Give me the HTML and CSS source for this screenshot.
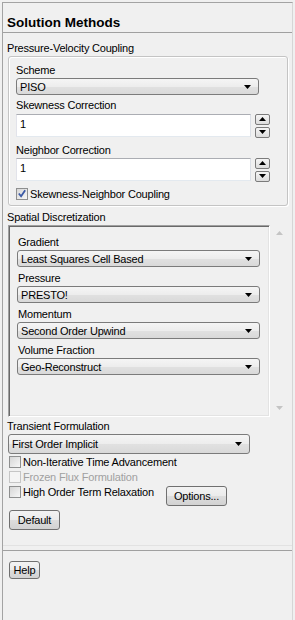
FILE: index.html
```html
<!DOCTYPE html>
<html lang="en">
<head>
    <meta charset="UTF-8">
    <meta name="viewport" content="width=device-width, initial-scale=1.0">
    <title>Solution Methods</title>
    <link rel="stylesheet" href="styles.css">
</head>
<body>
  <div class="panel">
    <div class="panel-title">Solution Methods</div>

    <div class="panel-main">
      <!-- Pressure-Velocity Coupling -->
      <div class="section-label">Pressure-Velocity Coupling</div>
      <div class="group">
        <div class="field-label">Scheme</div>
        <div class="select">
          <span>PISO</span>
          <svg class="arrow" width="7" height="4" viewBox="0 0 7 4"><path d="M0 0H7L3.5 4Z"/></svg>
        </div>

        <div class="field-label">Skewness Correction</div>
        <div class="spin-row">
          <div class="text-input">1</div>
          <div class="spinner">
            <span class="spin-btn"><svg width="7" height="4" viewBox="0 0 7 4"><path d="M0 4H7L3.5 0Z"/></svg></span>
            <span class="spin-btn"><svg width="7" height="4" viewBox="0 0 7 4"><path d="M0 0H7L3.5 4Z"/></svg></span>
          </div>
        </div>

        <div class="field-label">Neighbor Correction</div>
        <div class="spin-row">
          <div class="text-input">1</div>
          <div class="spinner">
            <span class="spin-btn"><svg width="7" height="4" viewBox="0 0 7 4"><path d="M0 4H7L3.5 0Z"/></svg></span>
            <span class="spin-btn"><svg width="7" height="4" viewBox="0 0 7 4"><path d="M0 0H7L3.5 4Z"/></svg></span>
          </div>
        </div>

        <div class="check-row">
          <span class="checkbox checked">
            <svg width="11" height="11" viewBox="0 0 11 11"><path d="M2 5.5L4.5 8.5L9 2" fill="none" stroke="#3b5aa6" stroke-width="2"/></svg>
          </span>
          <span>Skewness-Neighbor Coupling</span>
        </div>
      </div>

      <!-- Spatial Discretization -->
      <div class="section-label spaced">Spatial Discretization</div>
      <div class="scroll-area">
        <div class="scroll-view">
          <div class="field-label">Gradient</div>
          <div class="select">
            <span>Least Squares Cell Based</span>
            <svg class="arrow" width="7" height="4" viewBox="0 0 7 4"><path d="M0 0H7L3.5 4Z"/></svg>
          </div>
          <div class="field-label">Pressure</div>
          <div class="select">
            <span>PRESTO!</span>
            <svg class="arrow" width="7" height="4" viewBox="0 0 7 4"><path d="M0 0H7L3.5 4Z"/></svg>
          </div>
          <div class="field-label">Momentum</div>
          <div class="select">
            <span>Second Order Upwind</span>
            <svg class="arrow" width="7" height="4" viewBox="0 0 7 4"><path d="M0 0H7L3.5 4Z"/></svg>
          </div>
          <div class="field-label">Volume Fraction</div>
          <div class="select">
            <span>Geo-Reconstruct</span>
            <svg class="arrow" width="7" height="4" viewBox="0 0 7 4"><path d="M0 0H7L3.5 4Z"/></svg>
          </div>
        </div>
        <div class="scrollbar">
          <svg width="7" height="4" viewBox="0 0 7 4"><path d="M0 4H7L3.5 0Z"/></svg>
          <svg width="7" height="4" viewBox="0 0 7 4"><path d="M0 0H7L3.5 4Z"/></svg>
        </div>
      </div>

      <!-- Transient Formulation -->
      <div class="section-label transient">Transient Formulation</div>
      <div class="select wide">
        <span>First Order Implicit</span>
        <svg class="arrow" width="7" height="4" viewBox="0 0 7 4"><path d="M0 0H7L3.5 4Z"/></svg>
      </div>

      <div class="check-row outer">
        <span class="checkbox"></span>
        <span>Non-Iterative Time Advancement</span>
      </div>
      <div class="check-row outer disabled">
        <span class="checkbox"></span>
        <span>Frozen Flux Formulation</span>
      </div>
      <div class="option-row">
        <div class="check-row">
          <span class="checkbox"></span>
          <span>High Order Term Relaxation</span>
        </div>
        <div class="button options-btn">Options...</div>
      </div>

      <div class="button default-btn">Default</div>
    </div>

    <div class="panel-footer">
      <div class="button help-btn">Help</div>
    </div>
  </div>
</body>
</html>
```

FILE: styles.css
```css
* {
    box-sizing: border-box;
}

body {
    margin: 0;
    background: #f0f0f0;
    font-family: "Liberation Sans", Arial, sans-serif;
    font-size: 11px;
    letter-spacing: -0.2px;
    color: #000;
}

.panel {
    margin: 2px 0 0 2px;
    width: 291px;
    height: 618px;
    border-top: 1px solid #a3a3a3;
    border-left: 1px solid #a3a3a3;
    border-right: 1px solid #d6d6d6;
    display: flex;
    flex-direction: column;
}

.panel-title {
    height: 30px;
    padding: 11px 0 0 4px;
    border-bottom: 1px solid #a0a0a0;
    font-size: 13.5px;
    font-weight: bold;
    letter-spacing: 0;
    line-height: 18px;
}

.panel-main {
    height: 513px;
    border-bottom: 1px solid #e2e2e2;
}

/* Labels */
.section-label {
    line-height: 14px;
    height: 14px;
    padding-left: 4px;
    margin-top: 8px;
}

.section-label.spaced {
    margin-top: 4px;
}

.section-label.transient {
    margin-top: 2px;
}

.field-label {
    line-height: 14px;
    height: 14px;
}

/* Pressure-Velocity group */
.group {
    margin: 1px 0 0 5px;
    width: 280px;
    border: 1px solid #c4c4c4;
    border-radius: 3px;
    box-shadow: inset 1px 1px 0 #fff, 1px 1px 0 #fff;
    padding: 6px 0 4px 7px;
}

.group .select {
    margin-top: 1px;
    width: 243px;
}

.group .select + .field-label {
    margin-top: 3px;
}

.group .field-label + .spin-row {
    margin-top: 2px;
}

.group .spin-row + .field-label {
    margin-top: 6px;
}

.group .spin-row + .field-label + .spin-row {
    margin-top: 1px;
}

.group .check-row {
    margin-top: 5px;
}

/* Dropdowns */
.select {
    display: flex;
    align-items: center;
    height: 17px;
    padding: 0 7px 0 3px;
    border: 1px solid #7b7b7b;
    border-radius: 3px;
    background: linear-gradient(#f5f5f5 0%, #ededed 50%, #e1e1e1 51%, #d9d9d9 100%);
    line-height: 14px;
    white-space: nowrap;
}

.select span {
    flex: 1;
}

.select .arrow {
    flex: none;
}

.select.wide {
    margin: 1px 0 0 5px;
    width: 242px;
    height: 20px;
}

/* Spin inputs */
.spin-row {
    display: flex;
    align-items: center;
    height: 23px;
}

.text-input {
    width: 235px;
    height: 23px;
    padding: 2px 3px;
    line-height: 14px;
    background: #fff;
    border: 1px solid;
    border-color: #abadb3 #dbdfe6 #e3e9ef #e2e3ea;
}

.spinner {
    display: flex;
    flex-direction: column;
    gap: 2px;
    margin-left: 4px;
}

.spin-btn {
    display: flex;
    align-items: center;
    justify-content: center;
    width: 15px;
    height: 11px;
    border: 1px solid #7b7b7b;
    border-radius: 2px;
    background: linear-gradient(#f5f5f5, #dcdcdc);
}

/* Checkboxes */
.check-row {
    display: flex;
    align-items: center;
    height: 15px;
    line-height: 14px;
    white-space: nowrap;
}

.check-row.outer {
    margin-left: 6px;
}

.checkbox {
    display: flex;
    align-items: center;
    justify-content: center;
    flex: none;
    width: 12px;
    height: 12px;
    margin-right: 2px;
    border: 1px solid #8e8f8f;
    background: linear-gradient(135deg, #d6d6d6, #f7f7f7);
}

.disabled {
    color: #a0a0a0;
}

.disabled .checkbox {
    border-color: #c5c5c5;
    background: #f4f4f4;
}

/* Spatial scroll area */
.scroll-area {
    display: flex;
    margin: 1px 0 0 5px;
    height: 192px;
}

.scroll-view {
    width: 262px;
    padding: 9px 0 0 8px;
    border-top: 1px solid #a0a0a0;
    border-left: 1px solid #a0a0a0;
    border-bottom: 1px solid #fff;
    border-right: 1px solid #fff;
    box-shadow: inset 1px 1px 0 #696969, inset -1px -1px 0 #e3e3e3;
}

.scroll-view .field-label {
    padding-left: 1px;
}

.scroll-view .select {
    width: 243px;
    margin-top: 1px;
}

.scroll-view .select + .field-label {
    margin-top: 4px;
}

.scrollbar {
    width: 19px;
    display: flex;
    flex-direction: column;
    justify-content: space-between;
    align-items: center;
    padding: 6px 0 7px;
    fill: #c4c4c4;
}

/* Buttons */
.button {
    display: flex;
    align-items: center;
    justify-content: center;
    border: 1px solid #707070;
    border-radius: 3px;
    background: linear-gradient(#f3f3f3 0%, #ebebeb 50%, #dddddd 51%, #d2d2d2 100%);
    line-height: 14px;
}

.option-row {
    display: flex;
    align-items: flex-start;
    margin-left: 6px;
}

.option-row .check-row {
    width: 157px;
}

.options-btn {
    margin-top: 2px;
    width: 61px;
    height: 20px;
}

.default-btn {
    margin: 4px 0 0 6px;
    width: 51px;
    height: 20px;
}

.panel-footer {
    flex: 1;
    margin-top: 4px;
    border-top: 1px solid #a0a0a0;
    padding: 10px 0 0 6px;
}

.help-btn {
    width: 31px;
    height: 18px;
}
```
